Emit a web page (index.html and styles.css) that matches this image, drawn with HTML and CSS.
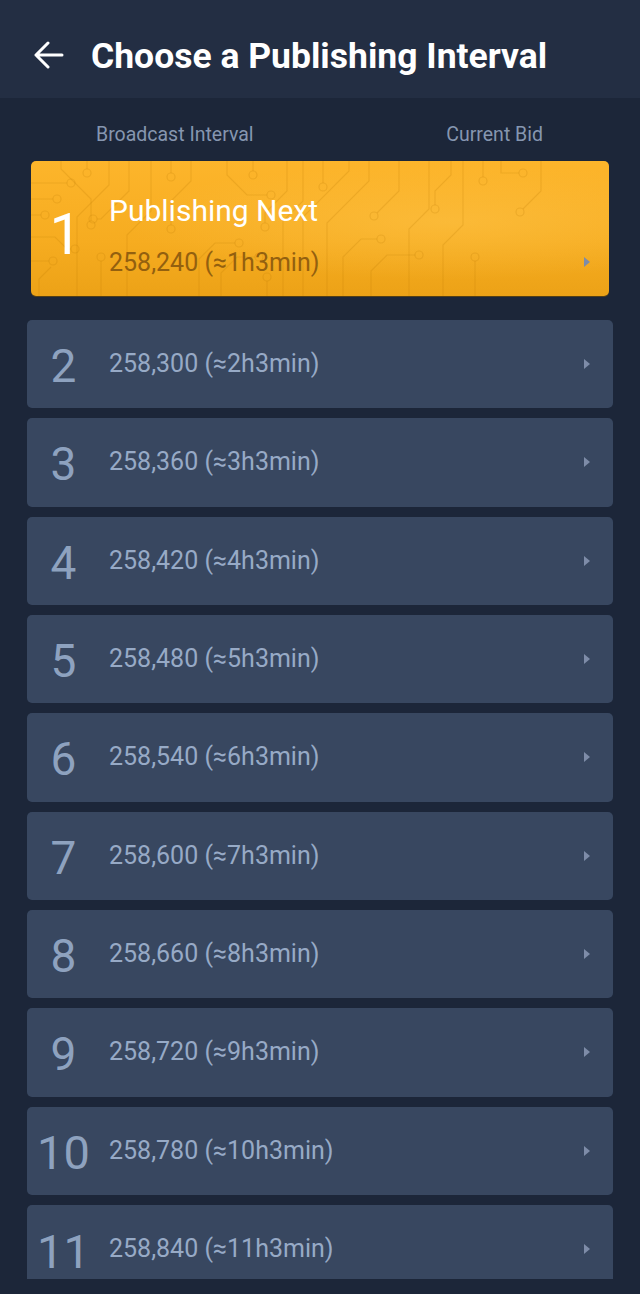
FILE: index.html
```html
<!DOCTYPE html>
<html lang="en">
<head>
    <meta charset="UTF-8">
    <meta name="viewport" content="width=device-width, initial-scale=1.0">
    <title>Choose a Publishing Interval</title>
    <link rel="stylesheet" href="styles.css">
</head>
<body>

    <header class="topbar">
        <button class="back" aria-label="Back">
            <svg width="30" height="30" viewBox="0 0 30 30">
                <path d="M28 15H2M14 3L2 15l12 12" fill="none" stroke="#fff" stroke-width="3" stroke-linecap="round" stroke-linejoin="round"/>
            </svg>
        </button>
        <h1>Choose a Publishing Interval</h1>
    </header>

    <div class="columns">
        <span>Broadcast Interval</span>
        <span class="col-bid">Current Bid</span>
    </div>

    <div class="list">
        <div class="row row-next">
            <svg class="circuit" viewBox="0 0 578 135" preserveAspectRatio="none">
                <g fill="none" stroke="#b87a00" stroke-opacity=".2" stroke-width="1.2">
                    <path d="M0 22H36"/><circle cx="40" cy="22" r="4"/>
                    <path d="M0 38H22"/><circle cx="26" cy="38" r="4"/>
                    <path d="M0 54H10"/><circle cx="14" cy="54" r="4"/>
                    <path d="M30 0V8L60 38V60"/><circle cx="60" cy="64" r="4"/>
                    <path d="M56 0V8"/><circle cx="56" cy="12" r="4"/>
                    <path d="M78 0V24L46 56V135"/>
                    <path d="M98 0V30L70 58H66"/><circle cx="62" cy="58" r="4"/>
                    <path d="M120 0V50L96 74V135"/>
                    <path d="M0 76H24L36 88H40"/><circle cx="44" cy="88" r="4"/>
                    <path d="M0 100H18"/><circle cx="22" cy="100" r="4"/>
                    <path d="M8 135V118L20 106"/>
                    <path d="M70 135V100"/><circle cx="70" cy="96" r="4"/>
                    <path d="M140 0V12"/><circle cx="140" cy="16" r="4"/>
                    <path d="M160 0V20L140 40V64"/><circle cx="140" cy="68" r="4"/>
                    <path d="M168 135V98L184 82H204"/><circle cx="208" cy="82" r="4"/>
                    <path d="M196 0V14L216 34H236"/><circle cx="240" cy="34" r="4"/>
                    <path d="M222 0V10"/><circle cx="222" cy="14" r="4"/>
                    <path d="M190 135V112L206 96H224"/><circle cx="228" cy="96" r="4"/>
                    <path d="M256 0V30L234 52V62"/><circle cx="234" cy="66" r="4"/>
                    <path d="M272 0V40L252 60V135"/>
                    <path d="M236 135V120"/><circle cx="236" cy="116" r="4"/>
                    <path d="M292 0V22"/><circle cx="292" cy="26" r="4"/>
                    <path d="M318 0V10L272 56V135"/>
                    <path d="M338 0V20L296 62V135"/>
                    <path d="M312 135V96L330 78H346"/><circle cx="350" cy="78" r="4"/>
                    <path d="M340 135V110L356 94H384"/><circle cx="388" cy="94" r="4"/>
                    <path d="M368 0V30L346 52"/><circle cx="343" cy="55" r="4"/>
                    <path d="M398 0V48L378 68V135"/>
                    <path d="M420 0V14L404 30V44"/><circle cx="404" cy="48" r="4"/>
                    <path d="M412 135V84L432 64V0"/>
                    <path d="M452 0V16"/><circle cx="452" cy="20" r="4"/>
                    <path d="M470 0V12H488"/><circle cx="492" cy="12" r="4"/>
                    <path d="M444 135V100"/><circle cx="444" cy="96" r="4"/>
                    <path d="M510 0V30L492 48"/><circle cx="489" cy="51" r="4"/>
                </g>
            </svg>
            <div class="row-num">1</div>
            <div class="row-body">
                <div class="row-title">Publishing Next</div>
                <div class="row-bid">258,240 (≈1h3min)</div>
            </div>
            <span class="row-arrow"></span>
        </div>

        <div class="row"><div class="row-num">2</div><div class="row-body"><div class="row-bid">258,300 (≈2h3min)</div></div><span class="row-arrow"></span></div>
        <div class="row"><div class="row-num">3</div><div class="row-body"><div class="row-bid">258,360 (≈3h3min)</div></div><span class="row-arrow"></span></div>
        <div class="row"><div class="row-num">4</div><div class="row-body"><div class="row-bid">258,420 (≈4h3min)</div></div><span class="row-arrow"></span></div>
        <div class="row"><div class="row-num">5</div><div class="row-body"><div class="row-bid">258,480 (≈5h3min)</div></div><span class="row-arrow"></span></div>
        <div class="row"><div class="row-num">6</div><div class="row-body"><div class="row-bid">258,540 (≈6h3min)</div></div><span class="row-arrow"></span></div>
        <div class="row"><div class="row-num">7</div><div class="row-body"><div class="row-bid">258,600 (≈7h3min)</div></div><span class="row-arrow"></span></div>
        <div class="row"><div class="row-num">8</div><div class="row-body"><div class="row-bid">258,660 (≈8h3min)</div></div><span class="row-arrow"></span></div>
        <div class="row"><div class="row-num">9</div><div class="row-body"><div class="row-bid">258,720 (≈9h3min)</div></div><span class="row-arrow"></span></div>
        <div class="row"><div class="row-num two">10</div><div class="row-body"><div class="row-bid">258,780 (≈10h3min)</div></div><span class="row-arrow"></span></div>
        <div class="row"><div class="row-num two">11</div><div class="row-body"><div class="row-bid">258,840 (≈11h3min)</div></div><span class="row-arrow"></span></div>
    </div>

</body>
</html>
```

FILE: styles.css
```css
body {
    background-color: #1c2639;
    font-family: Roboto, 'Liberation Sans', sans-serif;
    margin: 0;
    padding: 0;
    height: 1294px;
    overflow: hidden;
}

.topbar {
    display: flex;
    align-items: center;
    height: 98px;
    background-color: #232e43;
    padding: 14px 0 0 34px;
    box-sizing: border-box;
}

.back {
    background: none;
    border: 0;
    padding: 0;
    width: 30px;
    height: 30px;
    margin-top: -2px;
    display: flex;
}

.topbar h1 {
    margin: 0 0 0 27px;
    color: #fff;
    font-size: 35.5px;
    font-weight: 700;
    line-height: 40px;
}

.columns {
    display: flex;
    padding: 26px 97px 0 96px;
    height: 63px;
    box-sizing: border-box;
    color: #8696b0;
    font-size: 19.5px;
    line-height: 22px;
}

.col-bid {
    margin-left: auto;
}

.list {
    display: flex;
    flex-direction: column;
    gap: 10px;
    height: 1118px;
    overflow: hidden;
}

.row {
    flex: none;
    position: relative;
    display: flex;
    align-items: center;
    height: 88.33px;
    margin: 0 27px;
    background-color: #384760;
    border-radius: 5px;
    padding-right: 23px;
    color: #97aac6;
}

.row-num {
    width: 73px;
    text-align: center;
    font-size: 46px;
    line-height: 1;
    margin-top: 4px;
    color: #8ea2bf;
}

.row-num.two {
    font-size: 47px;
}

.row-body {
    flex: 1;
    margin-left: 9px;
    position: relative;
}

.row-bid {
    font-size: 25px;
    line-height: 30px;
}

.row-arrow {
    width: 0;
    height: 0;
    border-top: 5.5px solid transparent;
    border-bottom: 5.5px solid transparent;
    border-left: 6px solid #7e8ca8;
}

.row-next {
    height: 135px;
    margin: 0 31px 14px;
    padding-right: 19px;
    overflow: hidden;
    background: radial-gradient(ellipse at 72% 45%, rgba(255, 200, 80, 0.45), rgba(255, 200, 80, 0) 55%),
                linear-gradient(180deg, #fdb52b 0%, #f6ac20 60%, #eca217 100%);
    box-shadow: 0 1px 0 rgba(120, 80, 0, 0.6);
    align-items: flex-start;
}

.circuit {
    position: absolute;
    left: 0;
    top: 0;
    width: 100%;
    height: 100%;
}

.row-next .row-num {
    width: 69px;
    font-size: 57px;
    color: #fff;
    margin-top: 45px;
    position: relative;
}

.row-next .row-body {
    padding-top: 33px;
}

.row-title {
    color: #fff;
    font-size: 30px;
    line-height: 34px;
    margin-bottom: 20px;
}

.row-next .row-bid {
    color: #93600f;
}

.row-next .row-arrow {
    margin-top: 96px;
    position: relative;
}
```
